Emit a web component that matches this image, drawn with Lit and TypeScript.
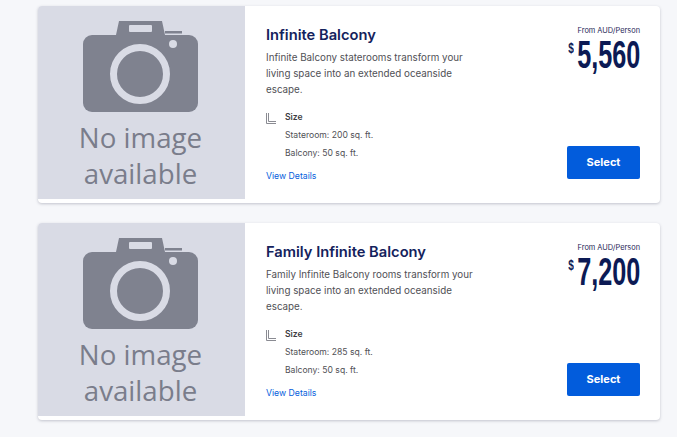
import { LitElement, html, css } from "lit";
import { customElement } from "lit/decorators.js";

const rooms = [
  { name: "Infinite Balcony", desc: "Infinite Balcony staterooms transform your living space into an extended oceanside escape.", room: "200", balcony: "50", price: "5,560" },
  { name: "Family Infinite Balcony", desc: "Family Infinite Balcony rooms transform your living space into an extended oceanside escape.", room: "285", balcony: "50", price: "7,200" },
];

@customElement("app-root")
export class AppRoot extends LitElement {
  static styles = css`
    :host { display: block; height: 437px; overflow: hidden; background: #f6f7fa; font-family: Inter, "Noto Sans", sans-serif; }
    .list { display: flex; flex-direction: column; gap: 20px; width: 622px; padding: 6px 0 0 38px; }
    .card { display: flex; height: 197px; background: #fff; border-radius: 4px; box-shadow: 0 1px 3px rgba(60, 65, 90, .28); overflow: hidden; }
    .img { width: 207px; height: 193px; background: #d9dbe5; display: flex; flex-direction: column; align-items: center; flex: none; }
    .img svg { display: block; flex: none; }
    .noimg { font: 27.7px/36px "Open Sans", sans-serif; color: #7a7d8b; text-align: center; margin: 1px 2px 0 0; }
    .info { flex: 1; padding: 19px 0 0 21px; }
    h2 { margin: 0; font-size: 14.7px; line-height: 20px; font-weight: 600; color: #14225c; }
    .desc { margin: 5px 0 0; width: 212px; font-size: 9.8px; line-height: 16px; color: #505055; }
    .size { display: flex; gap: 8px; margin-top: 13px; }
    .size svg { flex: none; margin: 2px 0 0 0; }
    .size b { display: block; font-size: 8.6px; line-height: 12px; font-weight: 600; color: #3c3c42; }
    .size span { display: block; font-size: 8.6px; line-height: 18px; color: #505055; }
    .size b + span { margin-top: 3px; }
    a { display: block; margin-top: 8px; font-size: 8.7px; line-height: 12px; color: #0660dc; text-decoration: none; }
    .buy { width: 100px; padding: 20px 20px 0 0; display: flex; flex-direction: column; align-items: flex-end; flex: none; }
    .from { font-size: 7.4px; line-height: 10px; color: #1f2758; white-space: nowrap; }
    .price { display: flex; align-items: flex-start; height: 36px; margin-top: 1px; color: #0c1a54; font-family: "Liberation Sans", sans-serif; font-weight: 700; }
    .cur { font-size: 14px; line-height: 14px; margin-top: 4px; transform: scaleX(.72); transform-origin: right; }
    .amt { font-size: 38.5px; line-height: 36px; margin-left: -30px; transform: scaleX(.655); transform-origin: right; }
    button { width: 73px; height: 33px; margin-top: 73px; padding: 0 0 2px; border: 0; border-radius: 2px; background: #025cdc; color: #fff; font: 700 11px Inter, sans-serif; }
  `;

  camera() {
    return html`<svg width="207" height="112" viewBox="0 0 207 112">
      <path fill="#7f828f" d="M81 15h43l3 14h-49z"/>
      <rect x="91" y="19" width="23" height="7" rx="1" fill="#d9dbe5"/>
      <rect x="127" y="25" width="17" height="2.5" fill="#7f828f"/>
      <rect x="45" y="29" width="115" height="77" rx="9" fill="#7f828f"/>
      <circle cx="135" cy="38" r="4" fill="#d9dbe5"/>
      <circle cx="102" cy="68" r="26.5" fill="none" stroke="#d9dbe5" stroke-width="7"/>
    </svg>`;
  }

  render() {
    return html`<div class="list">
      ${rooms.map((r) => html`<div class="card">
        <div class="img">${this.camera()}<div class="noimg">No image<br />available</div></div>
        <div class="info">
          <h2>${r.name}</h2>
          <p class="desc">${r.desc}</p>
          <div class="size">
            <svg width="11" height="11" viewBox="0 0 11 11" fill="none" stroke="#8a8b92" stroke-width="1"><path d="M.5 0v10.5H10M2.5 0v8.5H10"/></svg>
            <div><b>Size</b><span>Stateroom: ${r.room} sq. ft.</span><span>Balcony: ${r.balcony} sq. ft.</span></div>
          </div>
          <a href="#">View Details</a>
        </div>
        <div class="buy">
          <div class="from">From AUD/Person</div>
          <div class="price"><span class="cur">$</span><span class="amt">${r.price}</span></div>
          <button>Select</button>
        </div>
      </div>`)}
    </div>`;
  }
}
